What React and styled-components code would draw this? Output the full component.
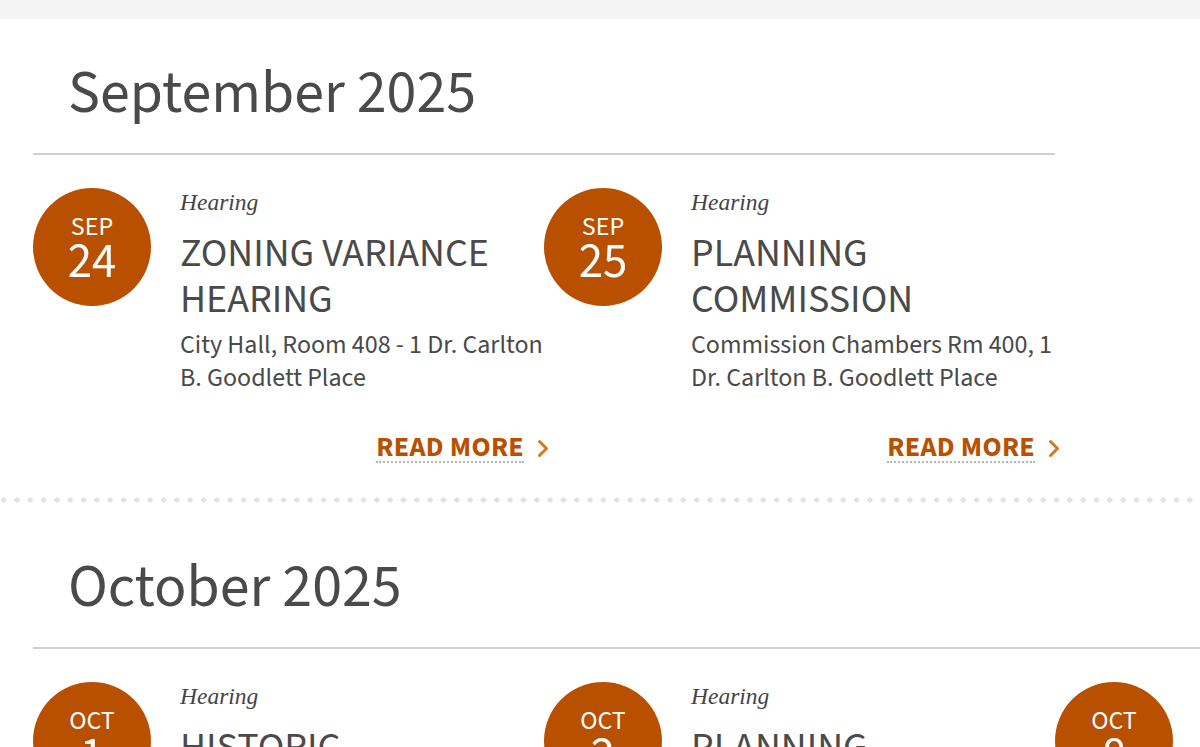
import React from "react"
import styled, { createGlobalStyle } from "styled-components"

const GlobalStyle = createGlobalStyle`
  body {
    margin: 0;
    background: #fff;
    font-family: "Source Sans 3", "Source Sans Pro", Lato, sans-serif;
    color: #4a4a4a;
    overflow: hidden;
  }
`;

const TopBand = styled.div`
  height: 19px;
  background-color: #f4f4f4;
`;

const Month = styled.section`
  padding: ${p => p.first ? "39px" : "49px"} 0 34px 33px;
`;

const MonthTitle = styled.h2`
  margin: 0 0 23px 35px;
  font-size: 60px;
  font-weight: 400;
  line-height: 72px;
  color: #4a4a4a;
`;

const Events = styled.div`
  display: flex;
  width: max-content;
  border-top: 2px solid #cfcfcf;
  padding-top: 33px;
`;

const Event = styled.article`
  display: flex;
  width: 511px;
  flex-shrink: 0;
`;

const DateBadge = styled.div`
  width: 118px;
  height: 118px;
  flex-shrink: 0;
  box-sizing: border-box;
  padding-top: 8px;
  border-radius: 50%;
  background-color: #b85000;
  color: #fff;
  display: flex;
  flex-direction: column;
  align-items: center;
  justify-content: center;
  margin-right: 29px;

  span {
    font-size: 26px;
    line-height: 26px;
    text-transform: uppercase;
    margin-top: -4px;
  }

  strong {
    font-size: 49px;
    font-weight: 400;
    line-height: 44px;
  }
`;

const Body = styled.div`
  width: 366px;
  display: flex;
  flex-direction: column;
`;

const Kind = styled.div`
  font-family: "Liberation Serif", "DejaVu Serif", serif;
  font-style: italic;
  font-size: 23.5px;
  line-height: 28px;
  color: #444;
`;

const Title = styled.h3`
  margin: 15px 0 0;
  font-size: 40px;
  font-weight: 400;
  line-height: 46px;
  text-transform: uppercase;
  color: #4a4a4a;
`;

const Place = styled.p`
  margin: 5px 0 0;
  font-size: 26px;
  line-height: 33px;
  color: #4a4a4a;
`;

const More = styled.div`
  display: flex;
  justify-content: flex-end;
  align-items: center;
  margin: 39px -5px 0 0;
  gap: 13px;
`;

const MoreLink = styled.a`
  display: inline-block;
  font-size: 28px;
  font-weight: 700;
  letter-spacing: 0.3px;
  line-height: 28px;
  color: #b85000;
  text-decoration: none;
  border-bottom: 2px dotted #b5b5b5;
`;

const Divider = styled.div`
  height: 6px;
  background-image: radial-gradient(circle, #e2e2e2 2.4px, transparent 2.8px);
  background-size: 13.33px 6px;
  background-position: -3px 0;
`;

const Chevron = () => (
  <svg width="12" height="19" viewBox="0 0 12 19" fill="none">
    <path d="M2.5 2.5 L9.5 9.5 L2.5 16.5" stroke="#d8771d" strokeWidth="3" strokeLinecap="round" strokeLinejoin="round" />
  </svg>
);

const months = [
  {
    name: "September 2025",
    events: [
      { mon: "Sep", day: 24, kind: "Hearing", title: "Zoning Variance Hearing", place: "City Hall, Room 408 - 1 Dr. Carlton B. Goodlett Place" },
      { mon: "Sep", day: 25, kind: "Hearing", title: "Planning Commission", place: "Commission Chambers Rm 400, 1 Dr. Carlton B. Goodlett Place" },
    ],
  },
  {
    name: "October 2025",
    events: [
      { mon: "Oct", day: 1, kind: "Hearing", title: "Historic Preservation Commission", place: "Commission Chambers Rm 400, 1 Dr. Carlton B. Goodlett Place" },
      { mon: "Oct", day: 2, kind: "Hearing", title: "Planning Commission", place: "Commission Chambers Rm 400, 1 Dr. Carlton B. Goodlett Place" },
      { mon: "Oct", day: 8, kind: "Hearing", title: "Zoning Variance Hearing", place: "City Hall, Room 408 - 1 Dr. Carlton B. Goodlett Place" },
    ],
  },
];

export default function App() {
  return (
    <>
      <GlobalStyle />
      <TopBand />
      {months.map((m, i) => (
        <React.Fragment key={m.name}>
          {i > 0 && <Divider />}
          <Month first={i === 0}>
            <MonthTitle>{m.name}</MonthTitle>
            <Events>
              {m.events.map(e => (
                <Event key={e.mon + e.day}>
                  <DateBadge>
                    <span>{e.mon}</span>
                    <strong>{e.day}</strong>
                  </DateBadge>
                  <Body>
                    <Kind>{e.kind}</Kind>
                    <Title>{e.title}</Title>
                    <Place>{e.place}</Place>
                    <More>
                      <MoreLink href="#">READ MORE</MoreLink>
                      <Chevron />
                    </More>
                  </Body>
                </Event>
              ))}
            </Events>
          </Month>
        </React.Fragment>
      ))}
    </>
  )
}
